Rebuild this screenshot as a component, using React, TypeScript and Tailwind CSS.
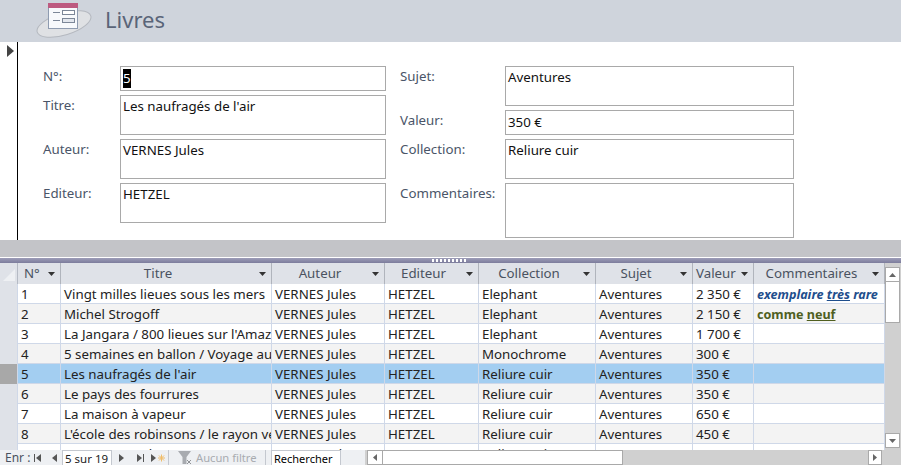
const columns = [
  { label: 'N°', width: 43, align: 'pl-[6px] text-left' },
  { label: 'Titre', width: 211, align: 'pr-[16px] text-center' },
  { label: 'Auteur', width: 113, align: 'pr-[16px] text-center' },
  { label: 'Editeur', width: 94, align: 'pr-[16px] text-center' },
  { label: 'Collection', width: 117, align: 'pr-[16px] text-center' },
  { label: 'Sujet', width: 97, align: 'pr-[16px] text-center' },
  { label: 'Valeur', width: 61, align: 'pl-[3px] text-left' },
  { label: 'Commentaires', width: 131, align: 'pr-[15px] text-center' },
];

const rows = [
  ['1', 'Vingt milles lieues sous les mers', 'VERNES Jules', 'HETZEL', 'Elephant', 'Aventures', '2 350 €'],
  ['2', 'Michel Strogoff', 'VERNES Jules', 'HETZEL', 'Elephant', 'Aventures', '2 150 €'],
  ['3', "La Jangara / 800 lieues sur l'Amazone", 'VERNES Jules', 'HETZEL', 'Elephant', 'Aventures', '1 700 €'],
  ['4', '5 semaines en ballon / Voyage au centre', 'VERNES Jules', 'HETZEL', 'Monochrome', 'Aventures', '300 €'],
  ['5', "Les naufragés de l'air", 'VERNES Jules', 'HETZEL', 'Reliure cuir', 'Aventures', '350 €'],
  ['6', 'Le pays des fourrures', 'VERNES Jules', 'HETZEL', 'Reliure cuir', 'Aventures', '350 €'],
  ['7', 'La maison à vapeur', 'VERNES Jules', 'HETZEL', 'Reliure cuir', 'Aventures', '650 €'],
  ['8', "L'école des robinsons / le rayon vert", 'VERNES Jules', 'HETZEL', 'Reliure cuir', 'Aventures', '450 €'],
  ['9', 'Hector Servadac', 'VERNES Jules', 'HETZEL', 'Reliure cuir', 'Aventures', '450 €'],
];

function rowColor(i: number) {
  if (i === 4) return 'bg-[#a3cef1]';
  return i % 2 === 0 ? 'bg-white' : 'bg-[#f3f3f3]';
}

function Field({ x, y, w, h, children }: { x: number; y: number; w: number; h: number; children?: React.ReactNode }) {
  return (
    <div
      className="absolute border border-[#a9a9a9] bg-white pl-[2px] pt-[1px] text-[13.3px] leading-[19px] text-[#111]"
      style={{ left: x, top: y, width: w, height: h }}
    >
      {children}
    </div>
  );
}

function Label({ x, y, children }: { x: number; y: number; children: React.ReactNode }) {
  return (
    <div className="absolute text-[13.3px] leading-[18px] text-[#4a5568]" style={{ left: x, top: y }}>
      {children}
    </div>
  );
}

function Caret() {
  return (
    <svg width="7" height="4" viewBox="0 0 7 4" className="absolute right-[5px] top-[9px]">
      <path d="M0 0h7L3.5 4z" fill="#333" />
    </svg>
  );
}

function FormIcon() {
  return (
    <svg width="56" height="42" viewBox="0 0 56 42" className="absolute left-[36px] top-0">
      <ellipse cx="28" cy="24" rx="28" ry="11" transform="rotate(-17 28 24)" fill="#dfe1e4" stroke="#b4b8bf" />
      <rect x="12.5" y="3.5" width="29" height="25" fill="#f7f9fc" stroke="#8e9bb0" />
      <rect x="12" y="3" width="30" height="5" fill="#bd5a80" />
      <path d="M17 12.5h7M17 20.5h7" stroke="#7c8798" />
      <rect x="26.5" y="10.5" width="12" height="4" fill="#fff" stroke="#7c8798" />
      <rect x="26.5" y="18.5" width="12" height="4" fill="#e3e7ee" stroke="#7c8798" />
    </svg>
  );
}

export default function App() {
  return (
    <div className="relative h-[465px] w-[901px] overflow-hidden bg-white font-['Lato','Liberation_Sans',sans-serif]">
      {/* form header */}
      <div className="relative h-[42px] bg-[#cfd4dc]">
        <FormIcon />
        <div className="absolute left-[105px] top-[3px] text-[22px] leading-[32px] text-[#5a6478]">Livres</div>
      </div>

      {/* form body */}
      <div className="relative h-[198px] bg-white">
        <div className="absolute bottom-0 left-[17px] top-0 w-px bg-black" />
        <svg width="7" height="12" viewBox="0 0 7 12" className="absolute left-[7px] top-[3px]">
          <path d="M0 0l7 6-7 6z" fill="#444" />
        </svg>

        <Label x={43} y={25}>N°:</Label>
        <Label x={43} y={54}>Titre:</Label>
        <Label x={43} y={98}>Auteur:</Label>
        <Label x={43} y={142}>Editeur:</Label>
        <Label x={400} y={25}>Sujet:</Label>
        <Label x={400} y={69}>Valeur:</Label>
        <Label x={400} y={98}>Collection:</Label>
        <Label x={400} y={142}>Commentaires:</Label>

        <Field x={120} y={24} w={266} h={25}>
          <span className="mt-[1px] inline-block bg-black text-white">5</span>
        </Field>
        <Field x={120} y={53} w={266} h={40}>Les naufragés de l'air</Field>
        <Field x={120} y={97} w={266} h={40}>VERNES Jules</Field>
        <Field x={120} y={141} w={266} h={40}>HETZEL</Field>
        <Field x={505} y={24} w={289} h={40}>Aventures</Field>
        <Field x={505} y={68} w={289} h={25}><span className="mt-[1px] inline-block">350 €</span></Field>
        <Field x={505} y={97} w={289} h={40}>Reliure cuir</Field>
        <Field x={505} y={141} w={289} h={55}></Field>
      </div>

      {/* gray band and splitter */}
      <div className="h-[17px] bg-[#c3c4c8]" />
      <div className="h-px bg-white" />
      <div className="relative h-[5px] bg-gradient-to-b from-[#9d9db8] to-[#7c7c9c]">
        <div className="absolute left-[432px] top-[1px] h-[3px] w-[35px] bg-[repeating-linear-gradient(90deg,#ffffff_0_2px,transparent_2px_4px)]" />
      </div>

      {/* datasheet */}
      <div className="relative h-[187px] overflow-hidden bg-white">
        <div className="flex h-[21px]">
          <div className="relative h-[21px] w-[18px] border-r border-[#b5bac4] bg-[#dfe2e8]">
            <svg width="12" height="12" viewBox="0 0 12 12" className="absolute left-[3px] top-[6px]">
              <path d="M12 0v12H0z" fill="#eef0f3" />
            </svg>
          </div>
          {columns.map((c) => (
            <div
              key={c.label}
              className={`relative h-[21px] shrink-0 border-r border-[#b0b4bc] bg-[#dfe2e8] text-[13.3px] leading-[20px] text-[#4a5260] ${c.align}`}
              style={{ width: c.width }}
            >
              {c.label}
              <Caret />
            </div>
          ))}
        </div>

        {rows.map((row, i) => (
          <div key={row[0]} className={`flex h-[20px] border-b border-[#cfd8e8] ${rowColor(i)}`}>
            <div className={`h-[20px] w-[18px] shrink-0 border-r border-[#cfd8e8] ${i === 4 ? 'bg-[#a8a8a8]' : 'bg-[#dfe2e8]'}`} />
            {columns.map((c, j) => (
              <div
                key={c.label}
                className="shrink-0 overflow-hidden whitespace-nowrap border-r border-[#cfd8e8] pl-[3px] text-[13.3px] leading-[20px] text-[#222]"
                style={{ width: c.width }}
              >
                {j < 7 && row[j]}
                {j === 7 && i === 0 && (
                  <span className="text-[12.6px] font-bold italic text-[#1f4e8c]">
                    exemplaire <u>très</u> rare
                  </span>
                )}
                {j === 7 && i === 1 && (
                  <span className="text-[12.6px] font-bold text-[#4f5f1f]">
                    comme <u>neuf</u>
                  </span>
                )}
              </div>
            ))}
          </div>
        ))}

        {/* vertical scrollbar */}
        <div className="absolute right-0 top-0 h-full w-[16px] bg-[#d0d0d0]">
          <div className="absolute left-0 top-[4px] flex h-[15px] w-[15px] items-center justify-center border border-[#a9a9a9] bg-white">
            <svg width="7" height="4" viewBox="0 0 7 4"><path d="M3.5 0L7 4H0z" fill="#666" /></svg>
          </div>
          <div className="absolute left-0 top-[18px] h-[42px] w-[15px] border border-[#a9a9a9] bg-white" />
          <div className="absolute bottom-[2px] left-0 flex h-[15px] w-[15px] items-center justify-center border border-[#a9a9a9] bg-white">
            <svg width="7" height="4" viewBox="0 0 7 4"><path d="M0 0h7L3.5 4z" fill="#666" /></svg>
          </div>
        </div>
      </div>

      {/* record navigation bar */}
      <div className="absolute bottom-0 left-0 h-[15px] w-[901px] bg-[#d0d0d0]">
        <div className="absolute left-0 top-0 h-full w-[365px] bg-[#eef0f3]" />
        <div className="absolute left-[5px] top-[-1px] text-[12px] leading-[17px] text-[#4a5260]">Enr :</div>
        <svg width="140" height="15" viewBox="0 0 140 15" className="absolute left-[30px] top-0" fill="#555">
          <path d="M4 4h1v8H4zM11 4v8L6 8z" />
          <path d="M27 4v8l-5-4z" />
          <path d="M89 4v8l5-4z" />
          <path d="M107 4v8l5-4zM113 4h1v8h-1z" />
          <path d="M121 4v8l5-4z" />
          <path d="M131.500 4.500v7M128 8h7M129 5.500l5 5M134 5.500l-5 5" stroke="#f0bc68" strokeWidth="1" />
        </svg>
        <div className="absolute left-[62px] top-0 h-[15px] w-[50px] border-x border-t border-[#c4c8cf] bg-white pl-[2px] text-[11.500px] leading-[16px] text-[#222]">
          5 sur 19
        </div>
        <div className="absolute left-[168px] top-0 h-full w-px bg-[#c4c8cf]" />
        <svg width="16" height="15" viewBox="0 0 16 15" className="absolute left-[177px] top-0">
          <path d="M1 1h13L9.500 7v7h-4V7z" fill="#a8abb0" />
          <path d="M10 10l4 4M14 10l-4 4" stroke="#8f9296" />
        </svg>
        <div className="absolute left-[196px] top-[-1px] text-[11.200px] leading-[17px] text-[#a8abb0]">Aucun filtre</div>
        <div className="absolute left-[265px] top-0 h-full w-px bg-[#c4c8cf]" />
        <div className="absolute left-[271px] top-0 h-[15px] w-[70px] border-x border-t border-[#c4c8cf] bg-white pl-[2px] text-[11px] leading-[16px] text-black">
          Rechercher
        </div>
        <div className="absolute left-[367px] top-0 flex h-[15px] w-[16px] items-center justify-center border border-[#a9a9a9] bg-white">
          <svg width="4" height="7" viewBox="0 0 4 7"><path d="M4 0v7L0 3.500z" fill="#666" /></svg>
        </div>
        <div className="absolute left-[382px] top-0 h-[15px] w-[241px] border border-[#a9a9a9] bg-white" />
        <div className="absolute left-[868px] top-0 flex h-[15px] w-[14px] items-center justify-center border border-[#a9a9a9] bg-white">
          <svg width="4" height="7" viewBox="0 0 4 7"><path d="M0 0v7l4-3.500z" fill="#666" /></svg>
        </div>
      </div>
    </div>
  );
}
